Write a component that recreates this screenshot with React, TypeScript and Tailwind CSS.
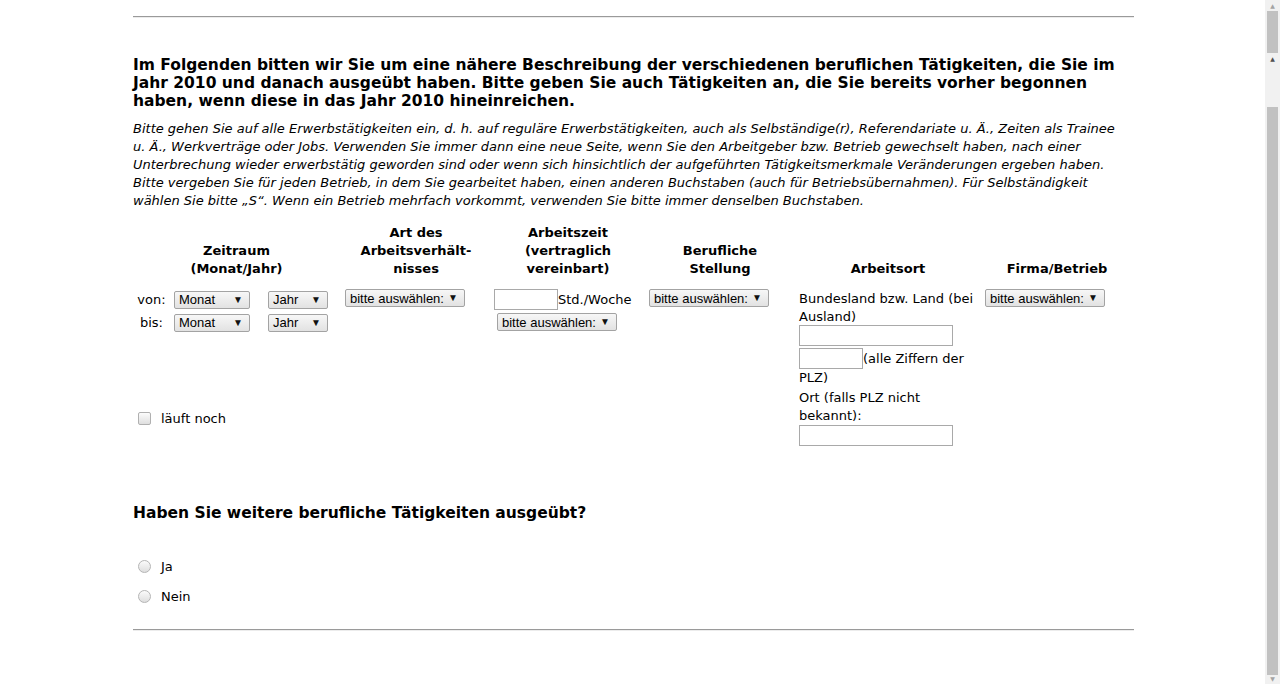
import React from "react";

const Sel = ({ label, w }: { label: string; w: string }) => (
  <div
    className={`${w} h-[18px] flex items-center justify-between pl-[4px] pr-[6px] border border-[#a3a3a3] rounded-[2px] bg-linear-to-b from-[#f7f7f7] to-[#e2e2e2] text-[13px] leading-none text-black font-['Liberation_Sans',Arial,sans-serif]`}
  >
    <span>{label}</span>
    <span className="text-[10px] text-[#111]">▼</span>
  </div>
);

const TextBox = ({ w }: { w: string }) => <div className={`${w} h-[21px] shrink-0 border border-[#a9a9a9] bg-white`} />;

const Radio = ({ label }: { label: string }) => (
  <div className="flex items-center h-[30px] pl-[5px]">
    <span className="w-[13px] h-[13px] rounded-full border border-[#b5b5b5] bg-linear-to-b from-[#fbfbfb] to-[#dedede]" />
    <span className="ml-[10px] text-[13px] mt-[2px]">{label}</span>
  </div>
);

function Scrollbar() {
  return (
    <div className="w-[15px] shrink-0 bg-[#f1f1f1] flex flex-col items-center">
      <span className="mt-[3px] text-[6px] leading-[6px] text-[#a3a3a3]">▲</span>
      <div className="mt-[2px] w-[11px] h-[42px] bg-[#c1c1c1]" />
      <span className="mt-[3px] text-[6px] leading-[6px] text-[#505050]">▲</span>
      <div className="mt-[45px] w-[11px] h-[568px] bg-[#c1c1c1]" />
      <span className="mt-[1px] text-[6px] leading-[6px] text-[#a3a3a3]">▼</span>
    </div>
  );
}

const Hr = () => <div className="h-[2px] border-t border-[#9a9a9a] border-b border-b-[#ececec]" />;

export default function App() {
  return (
    <div className="flex h-[684px] w-[1280px] overflow-hidden bg-white text-black font-['DejaVu_Sans',Verdana,sans-serif]">
      <div className="flex-1">
        <div className="ml-[133px] w-[1001px]">
          <div className="pt-[16px]">
            <Hr />
          </div>

          <h2 className="mt-[38px] text-[15.5px] leading-[18px] font-bold">
            Im Folgenden bitten wir Sie um eine nähere Beschreibung der verschiedenen beruflichen Tätigkeiten, die Sie im Jahr 2010 und danach ausgeübt haben. Bitte geben Sie auch Tätigkeiten an, die Sie bereits vorher begonnen haben, wenn diese in das Jahr 2010 hineinreichen.
          </h2>
          <p className="mt-[10px] text-[13px] leading-[18px] italic">
            Bitte gehen Sie auf alle Erwerbstätigkeiten ein, d.&nbsp;h. auf reguläre Erwerbstätigkeiten, auch als Selbständige(r), Referendariate u.&nbsp;Ä., Zeiten als Trainee u.&nbsp;Ä., Werkverträge oder Jobs. Verwenden Sie immer dann eine neue Seite, wenn Sie den Arbeitgeber bzw. Betrieb gewechselt haben, nach einer Unterbrechung wieder erwerbstätig geworden sind oder wenn sich hinsichtlich der aufgeführten Tätigkeitsmerkmale Veränderungen ergeben haben. Bitte vergeben Sie für jeden Betrieb, in dem Sie gearbeitet haben, einen anderen Buchstaben (auch für Betriebsübernahmen). Für Selbständigkeit wählen Sie bitte „S“. Wenn ein Betrieb mehrfach vorkommt, verwenden Sie bitte immer denselben Buchstaben.
          </p>

          <div className="mt-[14px] grid grid-cols-[207px_152px_152px_152px_184px_154px] items-end text-center text-[13px] leading-[18px] font-bold">
            <div>
              Zeitraum
              <br />
              (Monat/Jahr)
            </div>
            <div>
              Art des
              <br />
              Arbeitsverhält-
              <br />
              nisses
            </div>
            <div>
              Arbeitszeit
              <br />
              (vertraglich
              <br />
              vereinbart)
            </div>
            <div>
              Berufliche
              <br />
              Stellung
            </div>
            <div>Arbeitsort</div>
            <div>Firma/Betrieb</div>
          </div>

          <div className="mt-[11px] grid grid-cols-[207px_152px_152px_152px_184px_154px] items-start text-[13px] leading-[18px]">
            <div className="flex flex-col">
              <div className="flex items-center h-[19px] mt-[1px]">
                <span className="w-[37px] text-center">von:</span>
                <div className="ml-[4px]">
                  <Sel label="Monat" w="w-[76px]" />
                </div>
                <div className="ml-[18px]">
                  <Sel label="Jahr" w="w-[60px]" />
                </div>
              </div>
              <div className="flex items-center h-[19px] mt-[4px]">
                <span className="w-[37px] text-center">bis:</span>
                <div className="ml-[4px]">
                  <Sel label="Monat" w="w-[76px]" />
                </div>
                <div className="ml-[18px]">
                  <Sel label="Jahr" w="w-[60px]" />
                </div>
              </div>
              <div className="mt-[76px] flex items-center pl-[5px]">
                <span className="w-[13px] h-[13px] rounded-[2px] border border-[#b0b0b0] bg-linear-to-b from-[#fcfcfc] to-[#dfdfdf]" />
                <span className="ml-[10px] mt-[2px]">läuft noch</span>
              </div>
            </div>

            <div className="pl-[5px]">
              <Sel label="bitte auswählen:" w="w-[120px]" />
            </div>

            <div className="pl-[2px]">
              <div className="flex items-center">
                <TextBox w="w-[64px]" />
                <span>Std./Woche</span>
              </div>
              <div className="mt-[3px] pl-[3px]">
                <Sel label="bitte auswählen:" w="w-[120px]" />
              </div>
            </div>

            <div className="pl-[5px]">
              <Sel label="bitte auswählen:" w="w-[120px]" />
            </div>

            <div className="pl-[3px]">
              <div className="pt-[1px] mb-[-1px]">
                Bundesland bzw. Land (bei
                <br />
                Ausland)
              </div>
              <TextBox w="w-[154px]" />
              <div className="mt-[2px] flex items-center">
                <TextBox w="w-[64px]" />
                <span>(alle Ziffern der</span>
              </div>
              <div>PLZ)</div>
              <div className="mt-[2px]">
                Ort (falls PLZ nicht
                <br />
                bekannt):
              </div>
              <TextBox w="w-[154px]" />
            </div>

            <div className="pl-[5px]">
              <Sel label="bitte auswählen:" w="w-[120px]" />
            </div>
          </div>

          <h3 className="mt-[58px] text-[15.5px] leading-[18px] font-bold">Haben Sie weitere berufliche Tätigkeiten ausgeübt?</h3>

          <div className="mt-[29px] flex flex-col">
            <Radio label="Ja" />
            <Radio label="Nein" />
          </div>

          <div className="mt-[18px]">
            <Hr />
          </div>
        </div>
      </div>
      <Scrollbar />
    </div>
  );
}
